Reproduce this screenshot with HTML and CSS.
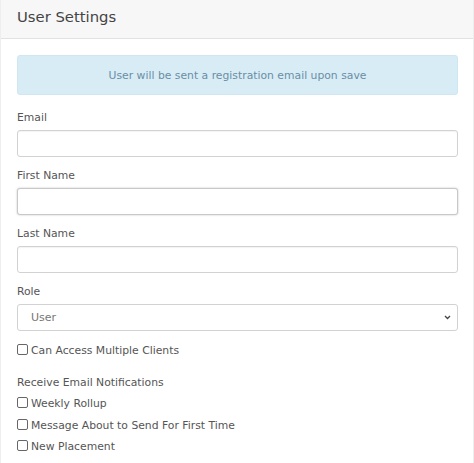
FILE: index.html
```html
<!DOCTYPE html>
<html>
<head>
<meta charset="utf-8">
<link rel="stylesheet" href="styles.css">
</head>
<body>
<div class="card">
  <div class="card-header">User Settings</div>
  <div class="card-body">
    <div class="alert">User will be sent a registration email upon save</div>
    <div class="group">
      <label class="label">Email</label>
      <input class="input" type="text">
    </div>
    <div class="group">
      <label class="label">First Name</label>
      <input class="input focus" type="text">
    </div>
    <div class="group">
      <label class="label">Last Name</label>
      <input class="input" type="text">
    </div>
    <div class="group">
      <label class="label">Role</label>
      <div class="select">
        <span class="select-value">User</span>
        <svg class="chevron" width="7" height="5" viewBox="0 0 7 5"><path d="M1 1 L3.5 3.5 L6 1" fill="none" stroke="#444" stroke-width="1.3"/></svg>
      </div>
    </div>
    <div class="check-row first"><span class="box"></span>Can Access Multiple Clients</div>
    <div class="section-label">Receive Email Notifications</div>
    <div class="check-row"><span class="box"></span>Weekly Rollup</div>
    <div class="check-row"><span class="box"></span>Message About to Send For First Time</div>
    <div class="check-row"><span class="box"></span>New Placement</div>
  </div>
</div>
</body>
</html>
```
FILE: styles.css
```css
* { box-sizing: border-box; }
html, body { margin: 0; padding: 0; background: #fff; }
body {
  font-family: "DejaVu Sans", "Open Sans", sans-serif;
  font-size: 10.8px;
  color: #555;
}
.card {
  width: 474px;
  height: 463px;
  border-left: 1px solid #eee;
  border-right: 1px solid #eee;
  overflow: hidden;
}
.card-header {
  height: 39px;
  background: #f7f7f8;
  border-bottom: 1px solid #e2e2e2;
  padding: 8px 16px 0 16px;
  font-size: 14.8px;
  color: #444;
  line-height: 18px;
}
.card-body {
  padding: 16px 15px 0 16px;
}
.alert {
  height: 40px;
  background: #d8ecf6;
  border: 1px solid #d0e6f1;
  border-radius: 3px;
  color: #6a8ea4;
  display: flex;
  align-items: center;
  justify-content: center;
}
.group {
  display: flex;
  flex-direction: column;
  margin-top: 15px;
}
.group + .group { margin-top: 11px; }
.label {
  line-height: 16px;
  margin-bottom: 4px;
  color: #555;
}
.input {
  height: 27px;
  border: 1px solid #d2d2d2;
  border-radius: 3px;
  background: #fff;
  box-shadow: inset 0 1px 1px rgba(0,0,0,0.05);
  margin: 0;
  padding: 0 10px;
  font: inherit;
}
.input.focus {
  border-color: #c8c8c8;
  box-shadow: 0 0 2px rgba(0,0,0,0.25);
}
.select {
  height: 27px;
  border: 1px solid #d2d2d2;
  border-radius: 3px;
  display: flex;
  align-items: center;
  justify-content: space-between;
  padding: 0 6px 0 13px;
  color: #777;
  font-size: 11px;
}
.chevron { display: block; }
.check-row {
  display: flex;
  align-items: center;
  height: 21.5px;
  color: #555;
}
.check-row.first { margin-top: 9px; margin-bottom: 10px; }
.box {
  width: 11px;
  height: 11px;
  border: 1px solid #666;
  border-radius: 2px;
  margin-right: 3px;
  margin-top: -2px;
  flex: none;
  background: #fff;
}
.section-label {
  height: 21.5px;
  display: flex;
  align-items: center;
}
```
